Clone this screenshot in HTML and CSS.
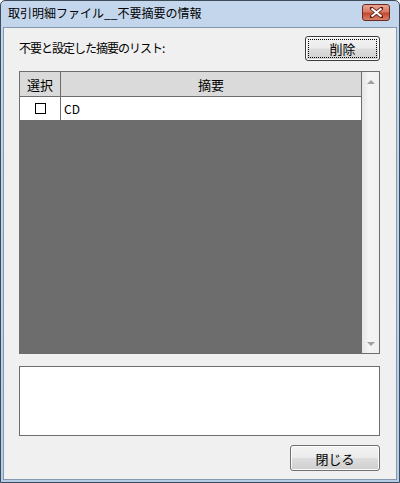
FILE: index.html
```html
<!DOCTYPE html>
<html lang="ja">
<head>
  <meta charset="UTF-8" />
  <title>取引明細ファイル__不要摘要の情報</title>
  <link rel="stylesheet" href="styles.css">
</head>
<body>

  <div class="window">
    <div class="titlebar">
      <span class="title">取引明細ファイル__不要摘要の情報</span>
      <button class="close-btn" aria-label="閉じる">
        <svg width="13" height="11" viewBox="0 0 13 11">
          <path d="M1 1 L12 10 M12 1 L1 10" stroke="#5a1a10" stroke-width="3.6" stroke-linecap="square"/>
          <path d="M1.5 1.5 L11.5 9.5 M11.5 1.5 L1.5 9.5" stroke="#ffffff" stroke-width="2.2"/>
        </svg>
      </button>
    </div>

    <div class="client">
      <div class="top-row">
        <span class="label">不要と設定した摘要のリスト:</span>
        <button class="btn default"><span class="focus">削除</span></button>
      </div>

      <div class="grid">
        <div class="grid-body">
          <div class="row head">
            <div class="col-check">選択</div>
            <div class="col-text">摘要</div>
          </div>
          <div class="row item">
            <div class="col-check"><span class="checkbox"></span></div>
            <div class="col-text left">CD</div>
          </div>
        </div>
        <div class="scrollbar">
          <span class="arrow up"></span>
          <span class="arrow down"></span>
        </div>
      </div>

      <textarea class="memo"></textarea>

      <div class="bottom-row">
        <button class="btn">閉じる</button>
      </div>
    </div>
  </div>

</body>
</html>
```

FILE: styles.css
```css
body {
  margin: 0;
  width: 400px;
  height: 483px;
  font-family: "Noto Sans CJK JP", "Noto Sans", sans-serif;
  font-size: 12px;
  color: #000;
}

.window {
  box-sizing: border-box;
  width: 400px;
  height: 483px;
  display: flex;
  flex-direction: column;
  background: linear-gradient(#c3d6ec, #b6cde7);
  border: 1px solid #3c4a5a;
  border-radius: 5px 5px 0 0;
  padding: 0 2px 2px;
}

.titlebar {
  height: 26px;
  display: flex;
  align-items: center;
  justify-content: space-between;
  padding: 0 7px 0 5px;
  flex-shrink: 0;
}

.title {
  line-height: 14px;
  margin-top: -2px;
}

.close-btn {
  width: 28px;
  height: 17px;
  margin-top: -3px;
  padding: 0;
  display: flex;
  align-items: center;
  justify-content: center;
  border: 1px solid #6b2a22;
  border-radius: 3px;
  background: linear-gradient(#e8a593 0%, #d97a63 45%, #c24a30 55%, #d8836a 100%);
}

.client {
  flex: 1;
  display: flex;
  flex-direction: column;
  background: #f0f0f0;
  border: 1px solid #8397ad;
  padding: 0 16px 0 15px;
}

.top-row {
  display: flex;
  align-items: center;
  justify-content: space-between;
  height: 26px;
  margin-top: 8px;
}

.label {
  margin-top: -3px;
  letter-spacing: -1px;
}

.btn {
  font-family: inherit;
  font-size: 13px;
  color: #000;
  padding: 0;
  border: 1px solid #707070;
  border-radius: 3px;
  background: linear-gradient(#f4f4f4 0%, #ebebeb 48%, #dddddd 52%, #cfcfcf 100%);
  box-shadow: inset 0 0 0 1px #fbfbfb;
}

.top-row .btn {
  width: 75px;
  height: 25px;
  margin-top: -2px;
}

.btn.default {
  border-color: #3c3c3c;
  padding: 2px;
}

.btn .focus {
  display: flex;
  align-items: center;
  justify-content: center;
  height: 100%;
  border: 1px dotted #000;
  box-sizing: border-box;
}

.grid {
  display: flex;
  height: 283px;
  margin-top: 9px;
  border: 1px solid #6d6d6d;
  box-sizing: border-box;
}

.grid-body {
  flex: 1;
  background: #6d6d6d;
  border-right: 1px solid #6d6d6d;
}

.row {
  display: flex;
  border-bottom: 1px solid #6d6d6d;
}

.row.head {
  height: 24px;
  background: #dadada;
  font-size: 13px;
}

.row.item {
  height: 23px;
  background: #fff;
}

.col-check {
  width: 40px;
  display: flex;
  align-items: center;
  justify-content: center;
  border-right: 1px solid #6d6d6d;
}

.col-text {
  flex: 1;
  display: flex;
  align-items: center;
  justify-content: center;
}

.col-text.left {
  justify-content: flex-start;
  padding-left: 3px;
}

.checkbox {
  width: 9px;
  height: 9px;
  border: 1px solid #000;
  background: #fff;
}

.scrollbar {
  width: 17px;
  position: relative;
  background: linear-gradient(90deg, #e6e6e6, #f4f4f4 40%, #f0f0f0);
}

.arrow {
  position: absolute;
  left: 5px;
  width: 0;
  height: 0;
  border-left: 4px solid transparent;
  border-right: 4px solid transparent;
}

.arrow.up {
  top: 8px;
  border-bottom: 4px solid #a0a0a0;
}

.arrow.down {
  bottom: 7px;
  border-top: 4px solid #a0a0a0;
}

.memo {
  height: 70px;
  margin: 12px 0 0;
  padding: 0;
  border: 1px solid #6d6d6d;
  background: #fff;
  resize: none;
  box-sizing: border-box;
}

.bottom-row {
  display: flex;
  justify-content: flex-end;
  margin-top: 9px;
}

.bottom-row .btn {
  width: 90px;
  height: 26px;
}
```
